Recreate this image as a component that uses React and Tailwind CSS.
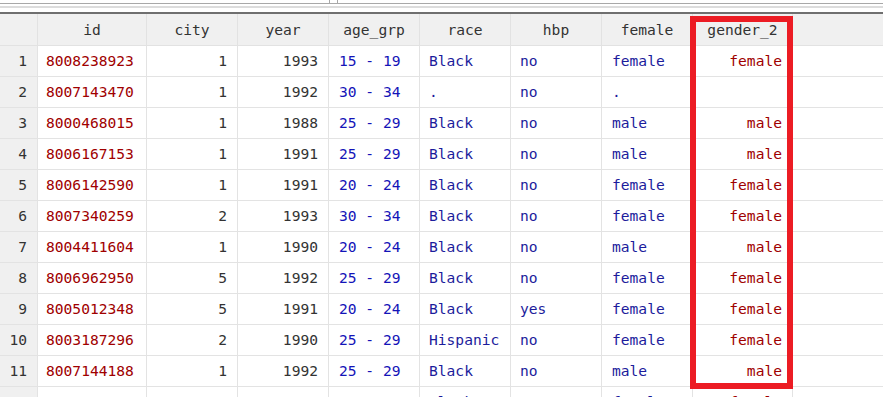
import { Fragment } from "react"

// data browser rows, last one is cut off by the window
const rows = [
  ["8008238923", "1", "1993", "15 - 19", "Black", "no", "female", "female"],
  ["8007143470", "1", "1992", "30 - 34", ".", "no", ".", ""],
  ["8000468015", "1", "1988", "25 - 29", "Black", "no", "male", "male"],
  ["8006167153", "1", "1991", "25 - 29", "Black", "no", "male", "male"],
  ["8006142590", "1", "1991", "20 - 24", "Black", "no", "female", "female"],
  ["8007340259", "2", "1993", "30 - 34", "Black", "no", "female", "female"],
  ["8004411604", "1", "1990", "20 - 24", "Black", "no", "male", "male"],
  ["8006962950", "5", "1992", "25 - 29", "Black", "no", "female", "female"],
  ["8005012348", "5", "1991", "20 - 24", "Black", "yes", "female", "female"],
  ["8003187296", "2", "1990", "25 - 29", "Hispanic", "no", "female", "female"],
  ["8007144188", "1", "1992", "25 - 29", "Black", "no", "male", "male"],
]

// only the tall letters of the next row peek in at the bottom
const partialRow = ["", "", "", "", "Black", "", "female", "female"]

const columns = [
  { name: "id", width: "w-[109px]", cell: "justify-start pl-[8px] text-[#a00000]" },
  { name: "city", width: "w-[91px]", cell: "justify-end pr-[10px] text-[#333333]" },
  { name: "year", width: "w-[91px]", cell: "justify-end pr-[10px] text-[#333333]" },
  { name: "age_grp", width: "w-[91px]", cell: "justify-start pl-[10px] text-[#1414b8]" },
  { name: "race", width: "w-[91px]", cell: "justify-start pl-[9px] text-[#1c1c9c]" },
  { name: "hbp", width: "w-[91px]", cell: "justify-start pl-[9px] text-[#1c1c9c]" },
  { name: "female", width: "w-[91px]", cell: "justify-start pl-[10px] text-[#1c1c9c]" },
  { name: "gender_2", width: "w-[100px]", cell: "justify-end pr-[10px] text-[#a00000]" },
]

function Row({ values, number }) {
  return (
    <div className="flex h-[31px] border-b border-[#e3e3e3]">
      <div className="w-[38px] shrink-0 bg-[#f0f0f0] border-r border-[#e3e3e3] flex items-center justify-end pr-[10px] text-[#333333]">
        {number}
      </div>
      {values.map((value, j) => (
        <Fragment key={j}>
          <div className={`${columns[j].width} shrink-0 border-r border-[#e3e3e3] flex items-center whitespace-pre ${columns[j].cell}`}>
            {value}
          </div>
        </Fragment>
      ))}
      <div className="flex-1" />
    </div>
  )
}

export default function App() {
  return (
    <div className="relative w-[883px] h-[397px] overflow-hidden bg-white font-['DejaVu_Sans_Mono','Liberation_Mono',monospace] text-[14.6px]">
      {/* toolbar edges */}
      <div className="flex h-[4px]">
        <div className="w-[330px] border-r border-b border-[#a8a8a8]" />
        <div className="w-[7px] border-b border-[#a8a8a8]" />
        <div className="flex-1 border-l border-b border-[#a8a8a8]" />
      </div>
      <div className="h-[2px]" />
      <div className="h-[2px] bg-[#dcdcdc]" />
      <div className="h-[4px]" />
      <div className="h-[2px] bg-[#6f6f6f]" />

      {/* header */}
      <div className="flex h-[32px] bg-[#f0f0f0] border-b border-[#e2e2e2] text-[#333333]">
        <div className="w-[38px] shrink-0 border-r border-[#e2e2e2]" />
        {columns.map(col => (
          <div key={col.name} className={`${col.width} shrink-0 border-r border-[#e2e2e2] flex items-center justify-center`}>
            {col.name}
          </div>
        ))}
        <div className="flex-1" />
      </div>

      {rows.map((row, i) => (
        <Row key={i} values={row} number={i + 1} />
      ))}
      <Row values={partialRow} number="" />

      {/* highlight around gender_2 */}
      <div className="absolute left-[690px] top-[16px] w-[103px] h-[373px] border-[6px] border-[#ec1c24]" />
    </div>
  )
}
